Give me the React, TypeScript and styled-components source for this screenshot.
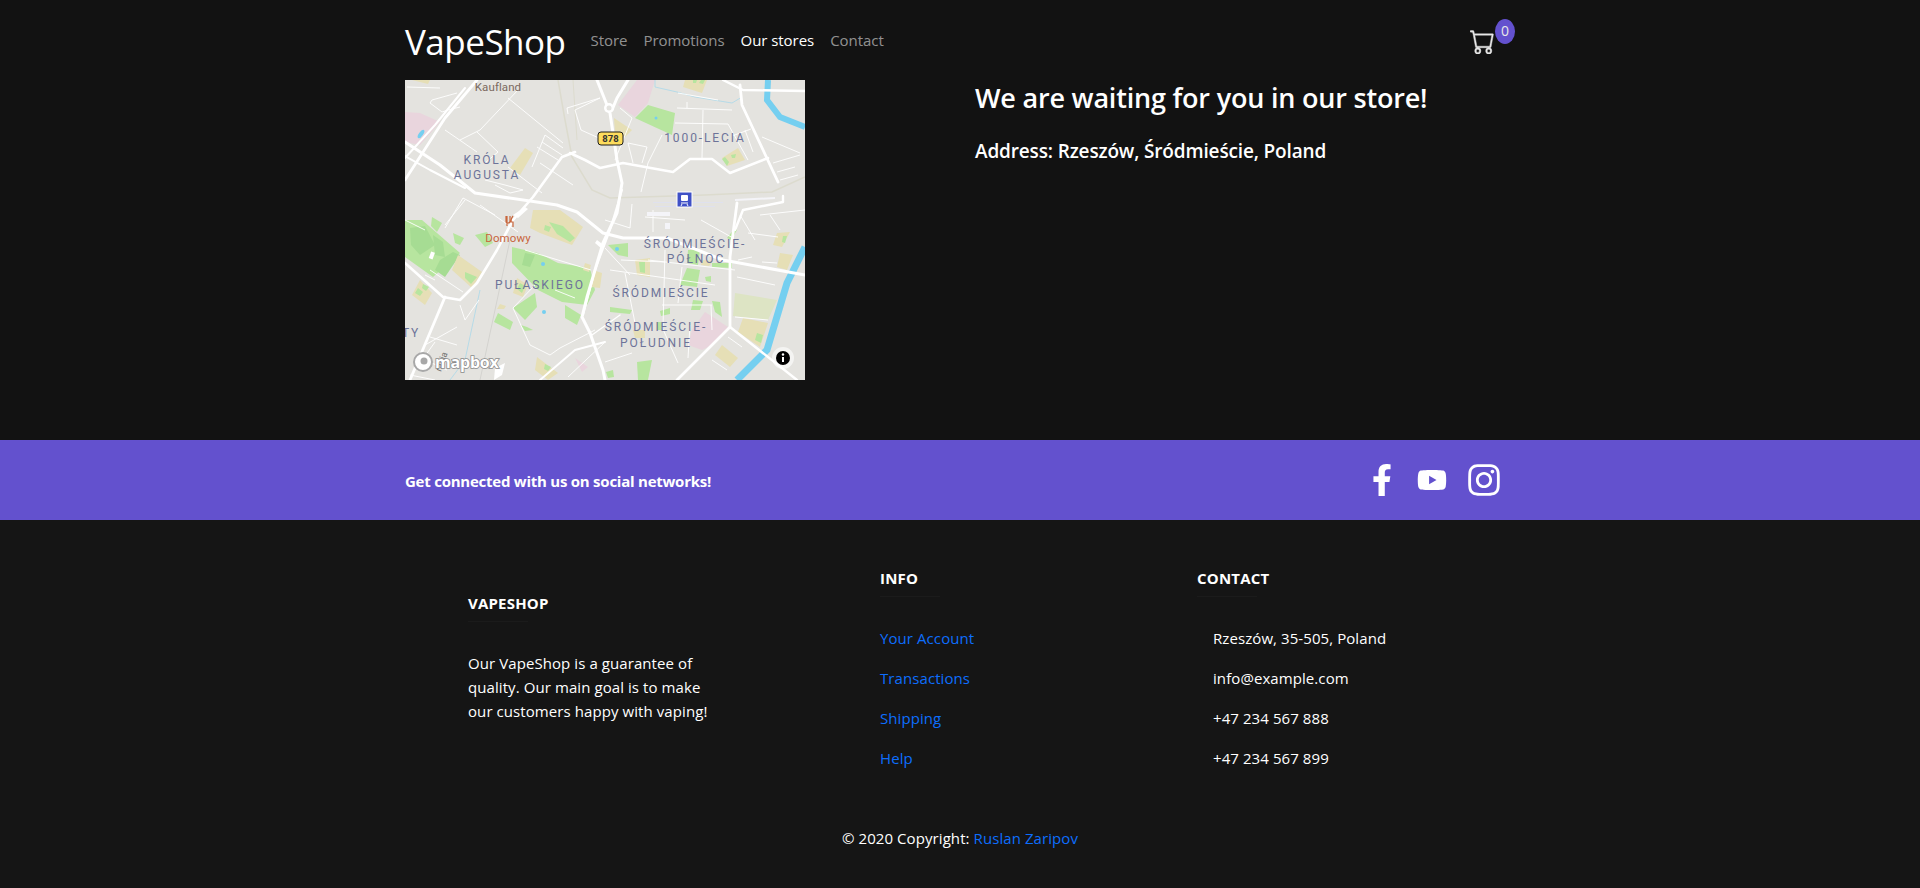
import styled, { createGlobalStyle } from 'styled-components';
import { BsCart } from 'react-icons/bs';
import { FaFacebookF, FaInstagram, FaYoutube } from 'react-icons/fa';

const GlobalStyle = createGlobalStyle`
    * {
        box-sizing: border-box;
    }
    body {
        margin: 0;
        background: #121212;
        color: #fff;
        font-family: 'Open Sans', 'Noto Sans', sans-serif;
        font-size: 15px;
        line-height: 24px;
        letter-spacing: 0.08px;
    }
`;

const Container = styled.div`
    width: 1140px;
    margin: 0 auto;
    padding: 0 15px;
`;

const NavBar = styled(Container)`
    height: 80px;
    display: flex;
    align-items: center;
    justify-content: space-between;
`;

const NavLeft = styled.div`
    display: flex;
    align-items: center;
`;

const Brand = styled.span`
    font-size: 35px;
    line-height: 44px;
    letter-spacing: -0.5px;
    margin-right: 25px;
    padding-top: 3px;
`;

const NavLink = styled.a<{ $active?: boolean }>`
    color: ${(p) => (p.$active ? '#fff' : 'rgba(255, 255, 255, 0.55)')};
    margin-right: 16px;
    font-size: 15px;
    letter-spacing: -0.05px;
`;

const CartButton = styled.div`
    position: relative;
    margin-right: 20px;
    margin-top: 2px;
    height: 25px;
    color: #e8e8e8;

    svg {
        stroke: currentColor;
        stroke-width: 0.25px;
    }
`;

const CartBadge = styled.span`
    position: absolute;
    left: 25px;
    top: -10px;
    width: 20px;
    height: 25px;
    border-radius: 50%;
    background: #6351ce;
    font-size: 14px;
    line-height: 24px;
    text-align: center;
`;

const StoreSection = styled(Container)`
    display: flex;
    height: 360px;
`;

const MapColumn = styled.div`
    width: 570px;
`;

const MapFrame = styled.svg`
    display: block;
    width: 400px;
    height: 300px;
    background: #e4e3df;
`;

const InfoColumn = styled.div`
    font-weight: 600;
`;

const Heading = styled.h2`
    margin: 0 0 21px;
    font-size: 27px;
    line-height: 36px;
    font-weight: 600;
    letter-spacing: -0.2px;
`;

const Address = styled.h3`
    margin: 0;
    font-size: 19px;
    line-height: 28px;
    font-weight: 600;
    letter-spacing: -0.15px;
`;

const SocialBar = styled.section`
    background: #6351ce;
    height: 80px;
`;

const SocialInner = styled(Container)`
    height: 100%;
    display: flex;
    align-items: center;
    justify-content: space-between;
`;

const SocialText = styled.span`
    font-weight: 700;
    font-size: 15px;
    letter-spacing: -0.24px;
    padding-top: 2px;
`;

const SocialIcons = styled.div`
    display: flex;
    align-items: center;
    gap: 19px;
    margin-right: 13px;
`;

const Footer = styled.footer`
    background: #151515;
    height: 368px;
    padding-top: 46px;
`;

const FooterGrid = styled.div`
    width: 1140px;
    height: 260px;
    margin: 0 auto;
    display: grid;
    grid-template-columns: 490px 317px 1fr;
`;

const AboutColumn = styled.div`
    padding: 25px 0 0 78px;
`;

const FooterTitle = styled.h6`
    margin: 0;
    font-size: 15px;
    line-height: 24px;
    font-weight: 700;
    letter-spacing: 0.2px;
    padding-bottom: 6px;
    border-bottom: 1px solid #1b1b1b;
    width: 60px;
    white-space: nowrap;
`;

const AboutText = styled.p`
    margin: 29px 0 0;
    width: 250px;
`;

const FooterRows = styled.div`
    margin-top: 29px;
    display: flex;
    flex-direction: column;
    gap: 16px;
`;

const FooterLink = styled.a`
    color: #0d6efd;
`;

const ContactRow = styled.span`
    padding-left: 16px;
`;

const Copyright = styled.div`
    text-align: center;
`;

const park = '#b7e59f';
const parkDark = '#a6dc93';
const sand = '#e6dfb6';
const pink = '#e9d5dd';
const land = '#dde4c4';

const areas: [string, string][] = [
    [sand, '7,0 25,0 23,4 15,2'],
    [pink, '0,32 15,33 35,42 15,65 0,62'],
    [sand, '120,68 128,73 115,95 105,88'],
    [pink, '232,0 250,0 243,23 230,37 213,25'],
    [park, '243,25 270,33 267,55 230,38'],
    [sand, '280,0 302,0 297,13 278,7'],
    [park, '288,0 292,0 291,3 288,3'],
    [park, '296,0 300,0 298,4 294,3'],
    [sand, '209,38 227,50 220,57 210,53'],
    [sand, '333,68 340,80 322,86 317,78'],
    [park, '320,77 324,82 322,86 317,79'],
    [park, '326,75 331,74 330,78 327,78'],
    [park, '0,140 17,140 55,173 28,197 0,177'],
    [parkDark, '5,148 20,146 30,165 15,175 6,165'],
    [parkDark, '28,155 38,162 40,177 30,175'],
    [parkDark, '35,180 48,172 55,175 40,197 30,190'],
    [sand, '53,175 77,192 67,208 47,190'],
    [park, '60,192 72,197 66,204 60,198'],
    [sand, '15,200 27,213 20,225 7,215'],
    [park, '13,208 18,212 15,216 10,213'],
    [park, '18,204 24,207 21,211 17,208'],
    [park, '27,137 37,143 32,152 26,146'],
    [park, '48,153 59,158 55,165 50,163'],
    [park, '70,155 82,152 88,163 80,167'],
    [park, '107,167 133,173 153,183 185,188 190,210 182,225 157,222 133,210 107,183'],
    [parkDark, '120,173 130,175 125,187 117,185'],
    [sand, '112,198 123,205 118,217 108,213'],
    [park, '115,203 120,206 117,213 112,209'],
    [park, '130,213 132,227 120,240 108,228'],
    [park, '93,233 108,242 105,250 89,242'],
    [park, '116,245 122,247 128,250 120,251'],
    [sand, '95,224 101,226 99,229 92,229'],
    [sand, '180,183 186,185 184,192 178,190'],
    [sand, '132,277 153,293 143,300 130,290'],
    [park, '140,284 146,287 143,291 139,289'],
    [sand, '128,130 155,130 178,147 167,165 135,153 125,148'],
    [park, '144,142 158,146 170,158 165,162 152,154'],
    [park, '140,145 146,147 144,152 139,150'],
    [sand, '188,190 197,193 195,208 186,207'],
    [park, '160,225 176,235 172,245 160,238'],
    [pink, '170,278 183,287 177,292'],
    [park, '203,165 223,163 223,177 213,175'],
    [park, '255,231 265,228 265,234 256,236'],
    [sand, '230,180 245,178 245,197 232,195'],
    [park, '234,182 240,182 240,193 235,192'],
    [park, '283,170 295,170 293,185 282,183'],
    [park, '307,183 327,183 327,188 307,187'],
    [park, '282,188 295,190 292,207 275,205'],
    [park, '288,220 298,221 295,230 286,230'],
    [park, '307,221 315,222 317,237 310,232'],
    [park, '205,227 227,230 225,234 205,232'],
    [park, '232,282 247,280 243,300 233,300'],
    [park, '252,242 257,242 257,250 252,250'],
    [park, '300,197 306,196 306,202 301,201'],
    [land, '330,213 372,220 363,240 328,236'],
    [sand, '338,238 363,243 355,267 333,252'],
    [park, '352,253 358,255 356,263 350,260'],
    [sand, '372,153 385,152 377,167 368,165'],
    [park, '378,156 382,156 380,163 377,162'],
    [sand, '375,173 388,175 382,190 372,187'],
    [sand, '317,265 333,278 325,287 310,275'],
    [sand, '228,250 240,250 240,258 230,258'],
    [sand, '298,180 308,181 304,186 296,185'],
    [park, '201,292 208,290 209,297 203,298'],
    [park, '322,158 330,148 332,150 326,160'],
    [pink, '300,232 323,247 307,265 297,270 283,265 287,250'],
];

const thinStreets = [
    '2,7 35,8',
    '52,13 27,20 25,23 37,32 43,30 55,27',
    '113,10 75,50 55,60',
    '40,50 72,72',
    '72,52 93,72 80,83',
    '103,18 158,63',
    '140,55 158,68',
    '137,62 157,75',
    '132,67 153,80',
    '140,55 127,87',
    '103,87 137,113',
    '135,83 168,105',
    '80,100 100,105 118,110 105,113 90,105',
    '60,120 40,145',
    '40,148 58,118 90,135',
    '75,125 113,152',
    '0,140 20,150',
    '162,28 195,18 170,30 176,50 205,63',
    '162,28 163,34',
    '215,28 227,38 210,80',
    '223,63 242,67 237,83',
    '223,63 228,83',
    '257,55 243,83 236,112',
    '272,28 327,30',
    '298,30 297,78',
    '270,43 323,44 343,80',
    '282,22 282,28',
    '273,13 313,20',
    '340,50 348,72',
    '346,49 327,56',
    '357,57 395,73',
    '368,83 395,75',
    '372,92 390,87',
    '375,100 393,95',
    '150,210 170,218',
    '120,170 186,190',
    '108,228 125,265 145,275',
    '108,228 130,205',
    '145,275 155,268 190,250',
    '163,297 200,262',
    '10,290 30,262',
    '20,265 52,247',
    '25,257 52,265',
    '16,278 42,290',
    '5,295 30,300',
    '55,225 60,240 74,220',
    '25,190 58,212',
    '30,200 20,195',
    '205,190 310,205',
    '243,180 330,190',
    '257,225 307,225',
    '332,197 370,205',
    '330,237 363,240',
    '260,170 258,247',
    '277,187 273,223',
    '220,193 230,243',
    '257,247 273,283',
    '200,282 227,273',
    '307,280 322,290',
    '323,257 337,267',
    '343,153 373,157',
    '357,182 372,183',
    '347,177 333,180',
    '285,245 283,278',
    '216,180 260,182',
    '200,168 225,195',
    '306,225 307,250',
    '227,124 225,148 200,140',
    '248,152 248,130',
    '240,137 280,140',
    '296,140 328,158',
    '335,135 350,160',
    '355,135 400,130',
    '365,135 375,150',
];

const wideStreets: [string, number][] = [
    ['192,0 200,20 205,33 212,80 217,103 212,133 198,163 182,217 177,237 185,253 198,290 200,300', 3],
    ['223,0 212,18 207,30', 3],
    ['217,110 205,150 190,190 178,235', 2],
    ['0,62 35,85 70,113 152,125 172,132 198,153 218,158 262,158 318,180 400,195', 3],
    ['0,76 25,90 60,108', 2],
    ['72,0 40,38 0,100', 2.8],
    ['60,8 30,45 0,78', 2],
    ['170,72 157,77 128,117 108,140 92,170 72,203 55,220 38,217 0,183', 2.6],
    ['165,73 180,80 195,88 218,83 268,92 285,79 307,79 325,93 363,78', 2.6],
    ['318,0 338,10 400,11', 2.4],
    ['335,5 337,25 373,102', 2.8],
    ['40,217 5,300', 2.8],
    ['332,123 325,177 325,247 272,300', 2.8],
    ['325,247 392,300', 2.4],
    ['378,116 378,122 338,130 330,150', 2.4],
    ['187,255 215,235', 1.3],
    ['135,300 170,270 200,262', 2],
];

const rail = '153,0 160,40 167,77 187,110 205,118 300,115 367,112 400,97';

const MapLabel = styled.text`
    font-family: 'Roboto', sans-serif;
    font-size: 12px;
    letter-spacing: 1.9px;
    fill: #6d7399;
    text-anchor: middle;
`;

const PlaceLabel = styled.text<{ $color: string }>`
    font-family: 'Roboto', sans-serif;
    font-size: 11.5px;
    fill: ${(p) => p.$color};
    text-anchor: middle;
`;

const MapboxMark = styled.text`
    font-family: 'Open Sans', sans-serif;
    font-size: 16px;
    font-weight: 700;
    letter-spacing: -0.2px;
    fill: #fff;
    stroke: #8b8b8b;
    stroke-width: 1.6px;
    paint-order: stroke;
`;

const StoreMap = () => (
    <MapFrame viewBox="0 0 400 300">
        {areas.map(([fill, points]) => (
            <polygon key={points} fill={fill} points={points} />
        ))}
        <polyline points={rail} fill="none" stroke="#dcdbce" strokeWidth="1.5" />
        <polyline points="168,0 172,60" fill="none" stroke="#dcdbce" strokeWidth="1" />
        <polyline
            points="250,0 250,7 272,12 290,17 327,23 337,17"
            fill="none"
            stroke="#a9d8ea"
            strokeWidth="0.8"
        />
        <polyline points="75,210 60,280 45,300" fill="none" stroke="#a9d8ea" strokeWidth="0.8" />
        <polyline points="105,160 75,300" fill="none" stroke="#d4d3cf" strokeWidth="1" />
        <polyline
            points="363,0 362,20 375,37 400,47"
            fill="none"
            stroke="#75cff0"
            strokeWidth="6"
        />
        <polyline
            points="400,167 382,203 362,270 332,300"
            fill="none"
            stroke="#75cff0"
            strokeWidth="7"
        />
        <ellipse cx="16" cy="54" rx="2" ry="5" fill="#75cff0" transform="rotate(35 16 54)" />
        <circle cx="251" cy="38" r="1.5" fill="#75cff0" />
        <circle cx="212" cy="169" r="2" fill="#75cff0" />
        <circle cx="138" cy="184" r="2" fill="#75cff0" />
        <circle cx="139" cy="232" r="2" fill="#75cff0" />
        {thinStreets.map((points) => (
            <polyline key={points} points={points} fill="none" stroke="#fff" strokeWidth="0.9" />
        ))}
        {wideStreets.map(([points, width]) => (
            <polyline
                key={points}
                points={points}
                fill="none"
                stroke="#fff"
                strokeWidth={width}
                strokeLinejoin="round"
                strokeLinecap="round"
            />
        ))}
        <circle cx="204" cy="28" r="5" fill="#fff" />
        <circle cx="204" cy="28" r="2.5" fill="#e4e3df" />
        <path d="M242 132h23v4h-23zM260 143h5v6h-5zM330 119l40-2v2l-40 2z" fill="#f4f4f8" />
        <path d="M248 122h70v1h-70zM250 126h60v1h-60z" fill="#dfe1ee" />
        <path d="M108 135l12-8 3 2-10 9zM192 160l8 6-3 3-7-6z" fill="#fff" />
        <rect x="25" y="172" width="4" height="7" fill="#fff" transform="rotate(20 27 175)" />
        <path d="M90 288l10-5-3 12-8 5z" fill="#fff" />
        <rect x="193" y="52" width="25" height="13" rx="3" fill="#fddc5c" stroke="#1d1d1d" />
        <text
            x="205.5"
            y="62"
            textAnchor="middle"
            fontFamily="Roboto, sans-serif"
            fontSize="9.5"
            fontWeight="700"
            fill="#333"
        >
            878
        </text>
        <rect x="272" y="112" width="15" height="15" fill="#3f50c6" stroke="#fff" />
        <rect x="276" y="115" width="7" height="6" rx="1" fill="#fff" />
        <path d="M277 124l-1 2M282 124l1 2M276 123h7" stroke="#fff" fill="none" />
        <path
            d="M101 136v10M104 136v5c0 1-1 2-2 2M100 136v5c0 1 1 2 2 2M107 136c-2 2-2 5-2 6h2v5"
            stroke="#c8663c"
            strokeWidth="1.2"
            fill="none"
            transform="translate(1 0)"
        />
        <PlaceLabel x="103" y="162" $color="#c8663c">
            Domowy
        </PlaceLabel>
        <PlaceLabel x="93" y="11" $color="#7b6a60">
            Kaufland
        </PlaceLabel>
        <MapLabel x="82" y="84">KRÓLA</MapLabel>
        <MapLabel x="82" y="99">AUGUSTA</MapLabel>
        <MapLabel x="300" y="62">1000-LECIA</MapLabel>
        <MapLabel x="290" y="168">ŚRÓDMIEŚCIE-</MapLabel>
        <MapLabel x="291" y="183">PÓŁNOC</MapLabel>
        <MapLabel x="135" y="209">PUŁASKIEGO</MapLabel>
        <MapLabel x="256" y="217">ŚRÓDMIEŚCIE</MapLabel>
        <MapLabel x="251" y="251">ŚRÓDMIEŚCIE-</MapLabel>
        <MapLabel x="251" y="267">POŁUDNIE</MapLabel>
        <MapLabel x="6" y="257">TY</MapLabel>
        <text
            x="36"
            y="292"
            fontFamily="Roboto, sans-serif"
            fontSize="9"
            fill="#6f6f6f"
            transform="rotate(-70 36 292)"
        >
            racja
        </text>
        <circle cx="18" cy="282" r="9" fill="#fff" stroke="#a8a8a8" strokeWidth="2" />
        <circle cx="19" cy="281" r="3.5" fill="#a8a8a8" />
        <MapboxMark x="30" y="288">mapbox</MapboxMark>
        <circle cx="378" cy="278" r="11" fill="#fff" fillOpacity="0.6" />
        <circle cx="378" cy="278" r="7" fill="#000" />
        <rect x="377" y="277" width="2" height="5" fill="#fff" />
        <circle cx="378" cy="274.5" r="1.2" fill="#fff" />
    </MapFrame>
);

export default function App() {
    return (
        <>
            <GlobalStyle />
            <NavBar as="nav">
                <NavLeft>
                    <Brand>VapeShop</Brand>
                    <NavLink>Store</NavLink>
                    <NavLink>Promotions</NavLink>
                    <NavLink $active>Our stores</NavLink>
                    <NavLink>Contact</NavLink>
                </NavLeft>
                <CartButton>
                    <BsCart size={25} />
                    <CartBadge>0</CartBadge>
                </CartButton>
            </NavBar>
            <StoreSection as="main">
                <MapColumn>
                    <StoreMap />
                </MapColumn>
                <InfoColumn>
                    <Heading>We are waiting for you in our store!</Heading>
                    <Address>Address: Rzeszów, Śródmieście, Poland</Address>
                </InfoColumn>
            </StoreSection>
            <SocialBar>
                <SocialInner>
                    <SocialText>Get connected with us on social networks!</SocialText>
                    <SocialIcons>
                        <FaFacebookF size={32} />
                        <FaYoutube size={30} />
                        <FaInstagram size={36} />
                    </SocialIcons>
                </SocialInner>
            </SocialBar>
            <Footer>
                <FooterGrid>
                    <AboutColumn>
                        <FooterTitle>VAPESHOP</FooterTitle>
                        <AboutText>
                            Our VapeShop is a guarantee of quality. Our main goal is to make our
                            customers happy with vaping!
                        </AboutText>
                    </AboutColumn>
                    <div>
                        <FooterTitle>INFO</FooterTitle>
                        <FooterRows>
                            <FooterLink>Your Account</FooterLink>
                            <FooterLink>Transactions</FooterLink>
                            <FooterLink>Shipping</FooterLink>
                            <FooterLink>Help</FooterLink>
                        </FooterRows>
                    </div>
                    <div>
                        <FooterTitle>CONTACT</FooterTitle>
                        <FooterRows>
                            <ContactRow>Rzeszów, 35-505, Poland</ContactRow>
                            <ContactRow>info@example.com</ContactRow>
                            <ContactRow>+47 234 567 888</ContactRow>
                            <ContactRow>+47 234 567 899</ContactRow>
                        </FooterRows>
                    </div>
                </FooterGrid>
                <Copyright>
                    © 2020 Copyright: <FooterLink>Ruslan Zaripov</FooterLink>
                </Copyright>
            </Footer>
        </>
    );
}
